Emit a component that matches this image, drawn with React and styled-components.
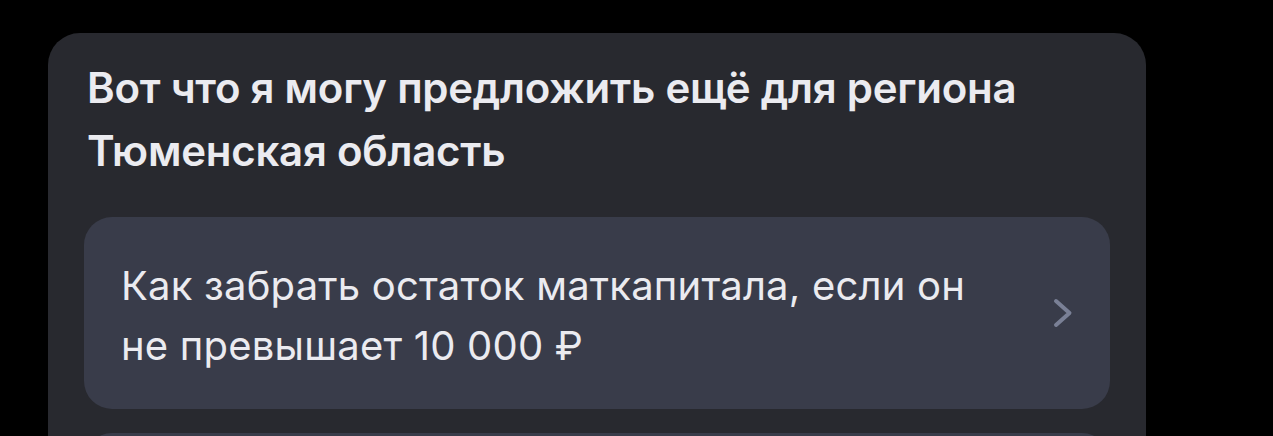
import React from "react";
import styled, { createGlobalStyle } from "styled-components";

const Global = createGlobalStyle`
  html, body { margin: 0; padding: 0; background: #000; }
  body { font-family: Inter, "Noto Sans", sans-serif; -webkit-font-smoothing: antialiased; }
  #root { height: 436px; overflow: hidden; }
`;

const Page = styled.div`
  padding: 33px 0 0 48px;
  height: 436px;
  box-sizing: border-box;
`;

const Card = styled.section`
  width: 1098px;
  background: #28292f;
  border-radius: 32px;
  padding: 23px 36px 40px 36px;
  box-sizing: border-box;
  min-height: 600px;
`;

const Title = styled.h2`
  margin: 0 0 0 3px;
  font-size: 42px;
  line-height: 63px;
  font-weight: 600;
  color: #ebebf0;
  letter-spacing: -0.25px;
`;

const List = styled.div`
  margin-top: 35px;
  display: flex;
  flex-direction: column;
  gap: 24px;
`;

const Item = styled.div`
  display: flex;
  align-items: center;
  justify-content: space-between;
  background: #393c4a;
  border-radius: 28px;
  padding: 39px 35px 33px 37px;
  min-height: 192px;
  box-sizing: border-box;
`;

const ItemText = styled.div`
  font-size: 40px;
  line-height: 60px;
  font-weight: 400;
  color: #ebebf0;
  letter-spacing: 0.2px;
`;

const ChevronBox = styled.div`
  display: flex;
  align-items: center;
  margin-top: -6px;
`;

const Chevron = () => (
  <ChevronBox>
    <svg width="24" height="34" viewBox="0 0 24 34">
      <path d="M5 5 L18.5 17 L5 29" fill="none" stroke="#7a8096" strokeWidth="4" strokeLinecap="round" strokeLinejoin="round" />
    </svg>
  </ChevronBox>
);

export default function App() {
  return (
    <>
      <Global />
      <Page>
        <Card>
          <Title>
            Вот что я могу предложить ещё для региона
            <br />
            Тюменская область
          </Title>
          <List>
            <Item>
              <ItemText>
                Как забрать остаток маткапитала, если он
                <br />
                не превышает 10 000 ₽
              </ItemText>
              <Chevron />
            </Item>
            <Item>
              <ItemText>&nbsp;</ItemText>
            </Item>
          </List>
        </Card>
      </Page>
    </>
  );
}
